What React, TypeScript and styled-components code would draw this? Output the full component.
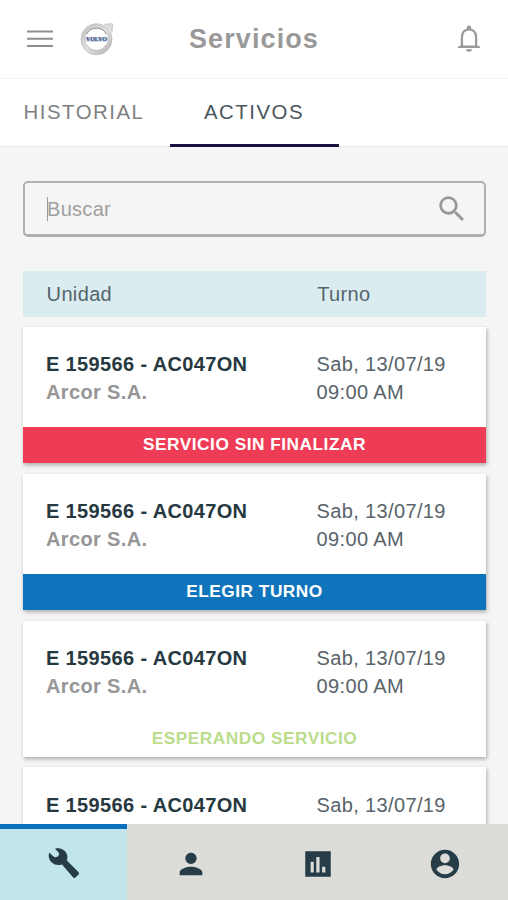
import React from 'react';
import styled, { createGlobalStyle } from 'styled-components';

const GlobalStyle = createGlobalStyle`
  * { box-sizing: border-box; }
  body {
    margin: 0;
    background: #f5f5f5;
    font-family: "Liberation Sans", Arial, sans-serif;
  }
`;

const Screen = styled.div`
  width: 508px;
  height: 900px;
  display: flex;
  flex-direction: column;
  overflow: hidden;
  background: #f5f5f5;
`;

const Header = styled.header`
  height: 79px;
  flex: none;
  display: grid;
  grid-template-columns: 27px 38px 1fr 28px;
  column-gap: 25px;
  align-items: center;
  padding: 0 25px 0 26px;
  background: #fff;
  border-bottom: 1px solid #f3f3f3;
`;

const Title = styled.h1`
  margin: 0 0 0 48px;
  font-size: 27px;
  line-height: 32px;
  font-weight: 700;
  letter-spacing: 1.1px;
  color: #999;
`;

const Tabs = styled.nav`
  height: 68px;
  flex: none;
  display: flex;
  background: #fff;
  border-bottom: 1px solid #e9e9e9;
`;

const Tab = styled.div<{ $active?: boolean }>`
  width: ${(p) => (p.$active ? 169 : 170)}px;
  height: 68px;
  padding: 21px 0 0 ${(p) => (p.$active ? 34 : 23.6)}px;
  font-size: 20.4px;
  line-height: 24px;
  letter-spacing: 1.5px;
  color: ${(p) => (p.$active ? '#4b565d' : '#7f7f7f')};
  border-bottom: 3px solid ${(p) => (p.$active ? '#17123f' : 'transparent')};
`;

const Content = styled.main`
  flex: 1;
  min-height: 0;
  overflow: hidden;
  padding: 34px 22px 0 23px;
`;

const SearchBox = styled.div`
  height: 56px;
  display: flex;
  align-items: center;
  justify-content: space-between;
  padding: 1px 15px 0 22px;
  border: 2px solid #b0b0b0;
  border-bottom-width: 3px;
  border-radius: 5px;
`;

const Placeholder = styled.span`
  display: flex;
  align-items: center;
  height: 24px;
  border-left: 1px solid #999;
  text-indent: -1px;
  font-size: 20px;
  letter-spacing: 0.3px;
  color: #a0a0a0;
`;

const columns = `
  display: grid;
  grid-template-columns: 270.6px 1fr;
`;

const ListHeader = styled.div`
  ${columns}
  height: 46px;
  margin: 34px 0 10px;
  padding-left: 23.6px;
  align-items: center;
  background: #dbecf0;
  font-size: 20px;
  letter-spacing: 0.35px;
  color: #55656c;
`;

const List = styled.div`
  display: flex;
  flex-direction: column;
  gap: 10.8px;
`;

const Card = styled.article`
  height: 136px;
  flex: none;
  background: #fff;
  box-shadow: 1px 2px 4px rgba(0, 0, 0, 0.3);
`;

const CardBody = styled.div`
  ${columns}
  height: 100px;
  padding: 23.4px 0 0 23px;
  font-size: 20px;
  line-height: 28px;
  letter-spacing: 0.36px;
`;

const Unit = styled.div`
  font-weight: 700;
  color: #263840;
`;

const Company = styled.div`
  font-weight: 700;
  color: #969696;
`;

const Appointment = styled.div`
  color: #59636a;
`;

type Tone = 'danger' | 'primary' | 'waiting';
const tones: Record<Tone, { bg: string; fg: string }> = {
  danger: { bg: '#ee3c57', fg: '#fff' },
  primary: { bg: '#0f74bb', fg: '#fff' },
  waiting: { bg: '#fff', fg: '#bbdc8b' },
};

const Status = styled.div<{ $tone: Tone }>`
  height: 36px;
  display: flex;
  align-items: center;
  justify-content: center;
  padding-bottom: 1px;
  background: ${(p) => tones[p.$tone].bg};
  color: ${(p) => tones[p.$tone].fg};
  font-size: 17.3px;
  font-weight: 700;
  letter-spacing: 0.5px;
`;

const BottomNav = styled.nav`
  height: 76px;
  flex: none;
  display: grid;
  grid-template-columns: repeat(4, 1fr);
  background: #dcddd8;
`;

const NavItem = styled.div<{ $active?: boolean }>`
  display: flex;
  align-items: center;
  justify-content: center;
  padding-bottom: 2px;
  border-top: 5px solid ${(p) => (p.$active ? '#0b6fbb' : 'transparent')};
  background: ${(p) => (p.$active ? '#c0e6eb' : 'transparent')} padding-box;
  color: #263d48;
`;

const Glyph = ({ d, size, box = 24 }: { d: string; size: number; box?: number }) => (
  <svg width={size} height={size} viewBox={`0 0 ${box} ${box}`} fill="currentColor">
    <path d={d} />
  </svg>
);

const MenuIcon = () => (
  <svg width="27" height="20" viewBox="0 0 27 20" stroke="#8e8e8e" strokeWidth="2">
    <path d="M1 2.5h26M1 9.7h26M1 16.9h26" />
  </svg>
);

const Logo = () => (
  <svg width="38" height="38" viewBox="0 0 38 38">
    <defs>
      <linearGradient id="metal" x1="0" y1="0" x2="1" y2="1">
        <stop offset="0" stopColor="#c2c2c2" />
        <stop offset="0.5" stopColor="#dedede" />
        <stop offset="1" stopColor="#b8b8b8" />
      </linearGradient>
    </defs>
    <path d="M26 4.3 34.5 3.8 34 12.3" fill="#dcdcdc" stroke="#c0c0c0" strokeWidth="0.9" />
    <circle cx="18.5" cy="19.3" r="13.5" fill="#fff" stroke="url(#metal)" strokeWidth="4.4" />
    <circle cx="18.5" cy="19.3" r="15.5" fill="none" stroke="#bdbdbd" strokeWidth="0.6" />
    <path d="M8.6 14.2a11.2 11.2 0 0 1 19.8 0" fill="none" stroke="#858585" strokeWidth="0.9" />
    <path d="M8.6 24.4a11.2 11.2 0 0 0 19.8 0" fill="none" stroke="#a8a8a8" strokeWidth="0.7" />
    <rect x="7" y="17" width="23" height="4.8" fill="#cdd4e3" />
    <text
      x="18.5"
      y="21.2"
      textAnchor="middle"
      textLength="21"
      lengthAdjust="spacingAndGlyphs"
      fontFamily="Liberation Serif, serif"
      fontWeight="700"
      fontSize="5.4"
      fill="#2c4179"
    >
      VOLVO
    </text>
  </svg>
);

const BellIcon = () => (
  <svg width="28" height="32" viewBox="0 0 28 32">
    <path
      d="M6.9 24V14.5C6.9 9.6 9.6 6.4 14 6.4S21.1 9.6 21.1 14.5V24"
      fill="none"
      stroke="#999"
      strokeWidth="2.3"
    />
    <path d="M2.8 25V23.8L6 22.4H22L25.2 23.8V25Z" fill="#999" />
    <circle cx="14" cy="4.6" r="2.2" fill="#999" />
    <path d="M11 26.3h6c0 1.6-1.2 2.5-3 2.5s-3-.9-3-2.5Z" fill="#999" />
  </svg>
);

const SearchGlyph = styled.span`
  display: flex;
  color: #999;
`;

const paths = {
  search:
    'M15.5 14h-.79l-.28-.27A6.471 6.471 0 0 0 16 9.5 6.5 6.5 0 1 0 9.5 16c1.61 0 3.09-.59 4.23-1.57l.27.28v.79l5 4.99L20.49 19l-4.99-5zm-6 0C7.01 14 5 11.99 5 9.5S7.01 5 9.5 5 14 7.01 14 9.5 11.99 14 9.5 14z',
  wrench:
    'M8 1.8C12.5.3 17.6 2.4 19.6 6.6C20.7 9 20.7 11.4 19.9 13.6L31.6 25.2Q32.6 26.3 31.6 27.4L28.4 30.6Q27.3 31.6 26.2 30.6L15 17.4C11.8 18.7 7.6 18.2 4.8 15.6C1.9 12.9 1 8.9 2.2 5.4L6.2 9.2C7.4 10.4 9.2 10.5 10.6 9.5C12.2 8.3 12.6 6.8 11.6 5.5Z',
  person:
    'M12 12c2.21 0 4-1.79 4-4s-1.79-4-4-4-4 1.79-4 4 1.79 4 4 4zm0 2c-2.67 0-8 1.34-8 4v2h16v-2c0-2.66-5.33-4-8-4z',
  chart:
    'M21 3H3v18h18V3zM9 18H6.8v-7.6H9v7.6zm4.1 0h-2.3V7h2.3v11zm4.1 0h-2.3v-4h2.3v4z',
  account:
    'M12 2C6.48 2 2 6.48 2 12s4.48 10 10 10 10-4.48 10-10S17.52 2 12 2zm0 2.6c1.88 0 3.4 1.5 3.4 3.4s-1.52 3.4-3.4 3.4-3.4-1.5-3.4-3.4 1.52-3.4 3.4-3.4zm0 14.6c-2.5 0-4.71-1.28-6-3.22.03-1.99 4-3.08 6-3.08 1.99 0 5.97 1.09 6 3.08-1.29 1.94-3.5 3.22-6 3.22z',
};

type Service = { tone?: Tone; label?: string; company?: string; time?: string };
const details = { company: 'Arcor S.A.', time: '09:00 AM' };
const services: Service[] = [
  { tone: 'danger', label: 'SERVICIO SIN FINALIZAR', ...details },
  { tone: 'primary', label: 'ELEGIR TURNO', ...details },
  { tone: 'waiting', label: 'ESPERANDO SERVICIO', ...details },
  {},
];

export default function App() {
  return (
    <Screen>
      <GlobalStyle />
      <Header>
        <MenuIcon />
        <Logo />
        <Title>Servicios</Title>
        <BellIcon />
      </Header>
      <Tabs>
        <Tab>HISTORIAL</Tab>
        <Tab $active>ACTIVOS</Tab>
      </Tabs>
      <Content>
        <SearchBox>
          <Placeholder>Buscar</Placeholder>
          <SearchGlyph>
            <Glyph d={paths.search} size={34} />
          </SearchGlyph>
        </SearchBox>
        <ListHeader>
          <span>Unidad</span>
          <span>Turno</span>
        </ListHeader>
        <List>
          {services.map((s, i) => (
            <Card key={i}>
              <CardBody>
                <div>
                  <Unit>E 159566 - AC047ON</Unit>
                  {s.company && <Company>{s.company}</Company>}
                </div>
                <Appointment>
                  <div>Sab, 13/07/19</div>
                  {s.time && <div>{s.time}</div>}
                </Appointment>
              </CardBody>
              {s.tone && <Status $tone={s.tone}>{s.label}</Status>}
            </Card>
          ))}
        </List>
      </Content>
      <BottomNav>
        <NavItem $active>
          <Glyph d={paths.wrench} size={33} box={33} />
        </NavItem>
        <NavItem>
          <Glyph d={paths.person} size={34} />
        </NavItem>
        <NavItem>
          <Glyph d={paths.chart} size={34} />
        </NavItem>
        <NavItem>
          <Glyph d={paths.account} size={34} />
        </NavItem>
      </BottomNav>
    </Screen>
  );
}
